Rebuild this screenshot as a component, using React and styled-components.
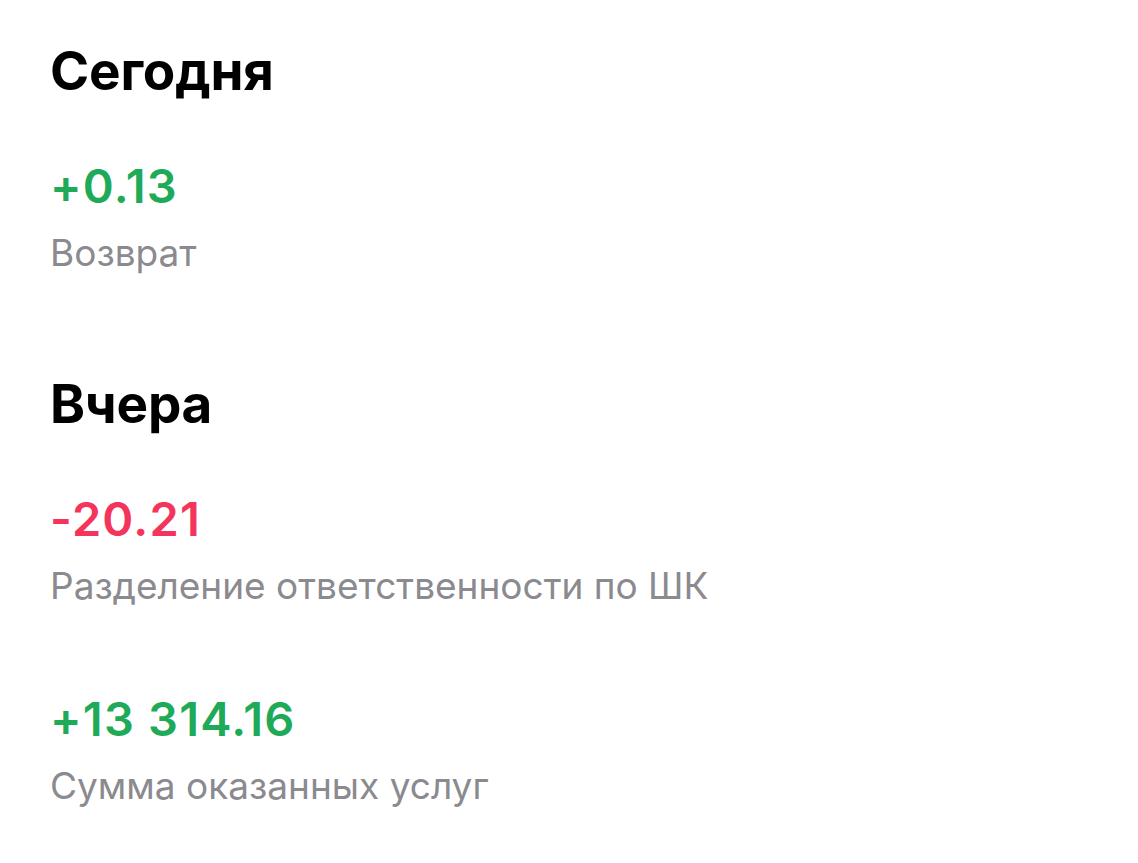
import React from 'react';
import styled, { createGlobalStyle } from 'styled-components';

const GlobalStyle = createGlobalStyle`
    body{
        margin: 0;
        background: #ffffff;
        font-family: Inter, "Noto Sans", "Liberation Sans", sans-serif;
        -webkit-font-smoothing: antialiased;
    }
`

const days = [
    {
        title: 'Сегодня',
        items: [
            { amount: '+0.13', label: 'Возврат' },
        ],
    },
    {
        title: 'Вчера',
        items: [
            { amount: '-20.21', label: 'Разделение ответственности по ШК' },
            { amount: '+13 314.16', label: 'Сумма оказанных услуг' },
        ],
    },
];

const App = () => {
    return (
        <>
            <GlobalStyle />
            <Container>
                {days.map((day) => (
                    <Day key={day.title}>
                        <Title>{day.title}</Title>
                        <List>
                            {day.items.map((item) => (
                                <Operation key={item.label}>
                                    <Amount $negative={item.amount.startsWith('-')}>
                                        {item.amount}
                                    </Amount>
                                    <Label>{item.label}</Label>
                                </Operation>
                            ))}
                        </List>
                    </Day>
                ))}
            </Container>
        </>
    );
}

export default App;

const Container = styled.div`
    display: flex;
    flex-direction: column;
    gap: 98px;
    padding: 40px 50px;
    min-height: 863px;
    box-sizing: border-box;
`

const Day = styled.section`
    display: flex;
    flex-direction: column;
    gap: 58px;
`

const Title = styled.h2`
    margin: 0;
    color: #000000;
    font-size: 53px;
    font-weight: 700;
    line-height: 62px;
    letter-spacing: -0.2px;
`

const List = styled.div`
    display: flex;
    flex-direction: column;
    gap: 85px;
`

const Operation = styled.div`
    display: flex;
    flex-direction: column;
    gap: 19px;
`

const Amount = styled.div`
    color: ${(p) => (p.$negative ? '#f4345b' : '#1faa59')};
    font-size: 47px;
    font-weight: 600;
    line-height: 52px;
    letter-spacing: 1.2px;
`

const Label = styled.div`
    color: #8a8a8f;
    font-size: 37px;
    font-weight: 400;
    line-height: 44px;
`
